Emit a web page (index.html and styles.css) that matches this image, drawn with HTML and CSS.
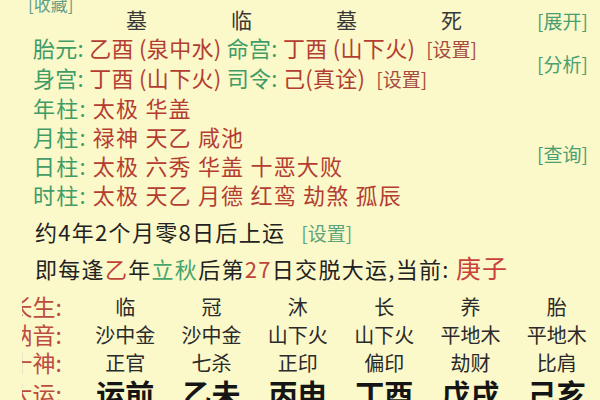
FILE: index.html
```html
<!DOCTYPE html>
<html lang="zh-CN">
<head>
  <meta charset="UTF-8">
  <meta name="viewport" content="width=device-width, initial-scale=1.0">
  <title>八字排盘</title>
  <link rel="stylesheet" href="styles.css">
</head>
<body>
  <div class="page">
    <div class="top">
      <div class="main">
        <div class="head">
          <div class="fav">[收藏]</div>
          <div class="cell">墓</div>
          <div class="cell">临</div>
          <div class="cell">墓</div>
          <div class="cell">死</div>
        </div>

        <div class="info">
          <div class="line tight"><span class="k">胎元:</span> <span class="v">乙酉 (泉中水)</span> <span class="k">命宫:</span> <span class="v">丁酉 (山下火)</span><span class="set">[设置]</span></div>
          <div class="line tight"><span class="k">身宫:</span> <span class="v">丁酉 (山下火)</span> <span class="k">司令:</span> <span class="v">己(真诠)</span><span class="set">[设置]</span></div>
          <div class="line"><span class="k">年柱:</span> <span class="v">太极 华盖</span></div>
          <div class="line"><span class="k">月柱:</span> <span class="v">禄神 天乙 咸池</span></div>
          <div class="line"><span class="k">日柱:</span> <span class="v">太极 六秀 华盖 十恶大败</span></div>
          <div class="line"><span class="k">时柱:</span> <span class="v">太极 天乙 月德 红鸾 劫煞 孤辰</span></div>
        </div>
      </div>

      <div class="side">
        <span class="link open">[展开]</span>
        <span class="link analyze">[分析]</span>
        <span class="link query">[查询]</span>
      </div>
    </div>

    <div class="yun">
      <div class="yun-line">约4年2个月零8日后上运<span class="set green">[设置]</span></div>
      <div class="yun-line">即每逢<span class="red">乙</span>年<span class="green-t">立秋</span>后第<span class="red">27</span>日交脱大运,当前: <span class="now">庚子</span></div>
    </div>

    <div class="table">
      <div class="label"><span>长生:</span></div>
      <div class="td">临</div>
      <div class="td">冠</div>
      <div class="td">沐</div>
      <div class="td">长</div>
      <div class="td">养</div>
      <div class="td">胎</div>

      <div class="label"><span>纳音:</span></div>
      <div class="td">沙中金</div>
      <div class="td">沙中金</div>
      <div class="td">山下火</div>
      <div class="td">山下火</div>
      <div class="td">平地木</div>
      <div class="td">平地木</div>

      <div class="label"><span>十神:</span></div>
      <div class="td">正官</div>
      <div class="td">七杀</div>
      <div class="td">正印</div>
      <div class="td">偏印</div>
      <div class="td">劫财</div>
      <div class="td">比肩</div>

      <div class="label"><span>大运:</span></div>
      <div class="td big">运前</div>
      <div class="td big">乙未</div>
      <div class="td big">丙申</div>
      <div class="td big">丁酉</div>
      <div class="td big">戊戌</div>
      <div class="td big">己亥</div>
    </div>
  </div>
</body>
</html>
```

FILE: styles.css
```css
html, body { margin: 0; padding: 0; background: #fbf8c9; }
body { font-family: "Noto Sans CJK SC", "Noto Sans", sans-serif; color: #262626; overflow: hidden; }
.page { width: 600px; height: 400px; overflow: hidden; }

.top { display: grid; grid-template-columns: 537px 1fr; }

.head { display: grid; grid-template-columns: 84px repeat(4, 105px); height: 33px; }
.fav { padding-left: 28px; margin-top: -6px; font-size: 17px; line-height: 20px; color: #5f9f86; }
.cell { text-align: center; font-size: 21px; line-height: 20px; padding-top: 9px; color: #383838; }

.info { padding-left: 33px; }
.line { font-size: 22px; line-height: 29px; letter-spacing: 1.2px; white-space: nowrap; }
.line.tight { letter-spacing: 0.3px; }
.k { color: #3f9c66; }
.v { color: #b43d32; }
.set { margin-left: 20px; font-size: 19px; letter-spacing: 0; color: #a84a40; }
.tight .set { margin-left: 11px; }
.set.green { margin-left: 16px; color: #5aa57c; }

.side { display: flex; flex-direction: column; align-items: flex-start; }
.link { font-size: 19px; line-height: 22px; color: #4a9f72; }
.open { margin-top: 10px; }
.analyze { margin-top: 21px; }
.query { margin-top: 68px; }

.yun { padding: 5px 0 0 35px; }
.yun-line { font-size: 22px; line-height: 34px; letter-spacing: 1.3px; white-space: nowrap; color: #222; }
.red { color: #c0443a; }
.green-t { color: #45a56c; }
.now { font-size: 25px; color: #c8423a; letter-spacing: 1px; }

.table { display: grid; grid-template-columns: 82px repeat(6, 1fr); grid-template-rows: 28px 28px 28px 34px; margin-top: 7px; }
.label { margin-left: 22px; padding-right: 20px; overflow: hidden; display: flex; justify-content: flex-end; align-items: center; font-size: 23px; color: #bd4c40; white-space: nowrap; }
.td { display: flex; justify-content: center; align-items: center; font-size: 20px; color: #2a2a2a; white-space: nowrap; }
.td.big { font-size: 29px; font-weight: bold; color: #151515; }
```
